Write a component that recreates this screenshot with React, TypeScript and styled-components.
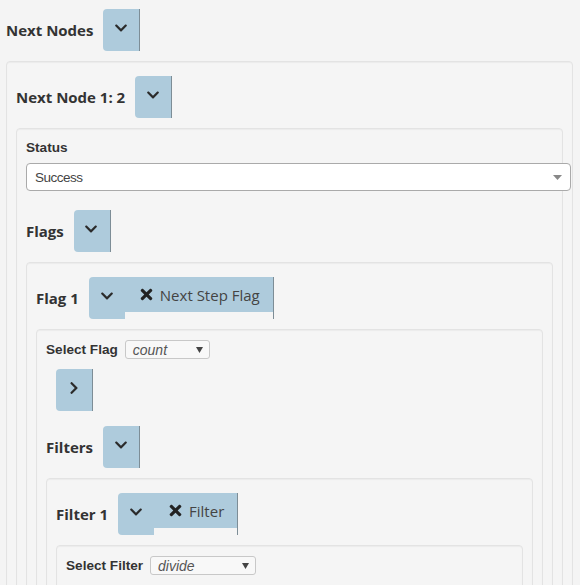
import React from "react";
import styled, { createGlobalStyle } from "styled-components";
import { FaChevronDown, FaChevronRight, FaTimes } from "react-icons/fa";

const Global = createGlobalStyle`
  html, body { margin: 0; padding: 0; background: #f4f4f4; }
  body { font-family: "Open Sans", "Liberation Sans", sans-serif; color: #333; }
  * { box-sizing: border-box; }
`;

const BLUE = "#aecbdc";
const EDGE = "#7d8d96";

const Page = styled.div`
  padding: 9px 7px 0 6px;
`;

const HeaderRow = styled.div<{ $mt?: number }>`
  display: flex;
  align-items: center;
  gap: 10px;
  height: 42px;
  margin-top: ${(p) => p.$mt ?? 0}px;
`;

const Title = styled.span`
  font-family: "Open Sans", sans-serif;
  font-weight: 700;
  font-size: 15px;
  color: #333;
`;

const Panel = styled.div<{ $pt?: number; $pb?: number }>`
  margin-top: 10px;
  border: 1px solid #e3e3e3;
  border-radius: 4px;
  background: #f5f5f5;
  box-shadow: inset 0 1px 1px rgba(0, 0, 0, 0.04);
  padding: ${(p) => p.$pt ?? 10}px 9px ${(p) => p.$pb ?? 14}px;
`;

const ToggleButton = styled.button<{ $ml?: number; $mt?: number }>`
  width: 37px;
  height: 42px;
  flex: none;
  border: 0;
  border-right: 1px solid ${EDGE};
  border-radius: 4px 0 0 4px;
  background: ${BLUE};
  color: #2b2b2b;
  padding: 0 1px 4px 0;
  margin: ${(p) => p.$mt ?? 0}px 0 0 ${(p) => p.$ml ?? 0}px;
  display: flex;
  align-items: center;
  justify-content: center;
`;

const Group = styled.div`
  display: flex;
  align-items: flex-start;
  height: 42px;
  border-right: 1px solid ${EDGE};
`;

const GroupToggle = styled.button`
  width: 36px;
  height: 42px;
  border: 0;
  border-radius: 4px 0 0 4px;
  background: ${BLUE};
  color: #2b2b2b;
  padding: 0 0 5px 0;
  display: flex;
  align-items: center;
  justify-content: center;
`;

const GroupLabel = styled.button`
  height: 35px;
  border: 0;
  background: ${BLUE};
  padding: 0 13px;
  display: flex;
  align-items: center;
  gap: 5px;
  font-family: "Open Sans", sans-serif;
  font-size: 15px;
  color: #444;
  svg { color: #222; }
`;

const Label = styled.label`
  display: block;
  font-family: "Liberation Sans", Arial, sans-serif;
  font-weight: 700;
  font-size: 13.6px;
  line-height: 18px;
  color: #333;
`;

const BigSelect = styled.div`
  margin-top: 6px;
  width: calc(100% + 18px);
  height: 28px;
  border: 1px solid #aaa;
  border-radius: 4px;
  background: #fff;
  padding: 0 8px 0 8px;
  display: flex;
  align-items: center;
  justify-content: space-between;
  font-family: "Liberation Sans", Arial, sans-serif;
  font-size: 13.5px;
  letter-spacing: -0.5px;
  color: #444;
`;

const FieldRow = styled.div`
  display: flex;
  align-items: center;
  gap: 7px;
  height: 19px;
`;

const SmallSelect = styled.div<{ $w: number }>`
  width: ${(p) => p.$w}px;
  height: 19px;
  border: 1px solid #c8c8c8;
  border-radius: 3px;
  background: #f8f8f8;
  padding: 0 6px 0 7px;
  display: flex;
  align-items: center;
  justify-content: space-between;
  font-family: "Liberation Sans", Arial, sans-serif;
  font-style: italic;
  font-size: 14px;
  color: #555;
`;

const Caret = ({ color, w, h }: { color: string; w: number; h: number }) => (
  <svg width={w} height={h} viewBox={`0 0 ${w} ${h}`}>
    <polygon points={`0,0 ${w},0 ${w / 2},${h}`} fill={color} />
  </svg>
);

const Down = () => <FaChevronDown size={14} />;

export default function App() {
  return (
    <>
      <Global />
      <Page>
        <HeaderRow>
          <Title>Next Nodes</Title>
          <ToggleButton><Down /></ToggleButton>
        </HeaderRow>
        <Panel $pt={14}>
          <HeaderRow>
            <Title>Next Node 1: 2</Title>
            <ToggleButton><Down /></ToggleButton>
          </HeaderRow>
          <Panel $pt={10}>
            <Label>Status</Label>
            <BigSelect>
              <span>Success</span>
              <Caret color="#888" w={9} h={5} />
            </BigSelect>
            <HeaderRow $mt={19}>
              <Title>Flags</Title>
              <ToggleButton><Down /></ToggleButton>
            </HeaderRow>
            <Panel $pt={14}>
              <HeaderRow>
                <Title>Flag 1</Title>
                <Group>
                  <GroupToggle><Down /></GroupToggle>
                  <GroupLabel>
                    <FaTimes size={17} />
                    Next Step Flag
                  </GroupLabel>
                </Group>
              </HeaderRow>
              <Panel $pt={10}>
                <FieldRow>
                  <Label>Select Flag</Label>
                  <SmallSelect $w={85}>
                    <span>count</span>
                    <Caret color="#444" w={7} h={6} />
                  </SmallSelect>
                </FieldRow>
                <ToggleButton $ml={10} $mt={10}>
                  <FaChevronRight size={14} />
                </ToggleButton>
                <HeaderRow $mt={15}>
                  <Title>Filters</Title>
                  <ToggleButton><Down /></ToggleButton>
                </HeaderRow>
                <Panel $pt={14}>
                  <HeaderRow>
                    <Title>Filter 1</Title>
                    <Group>
                      <GroupToggle><Down /></GroupToggle>
                      <GroupLabel>
                        <FaTimes size={17} />
                        Filter
                      </GroupLabel>
                    </Group>
                  </HeaderRow>
                  <Panel $pt={10} $pb={30}>
                    <FieldRow>
                      <Label>Select Filter</Label>
                      <SmallSelect $w={106}>
                        <span>divide</span>
                        <Caret color="#444" w={7} h={6} />
                      </SmallSelect>
                    </FieldRow>
                  </Panel>
                </Panel>
              </Panel>
            </Panel>
          </Panel>
        </Panel>
      </Page>
    </>
  );
}
